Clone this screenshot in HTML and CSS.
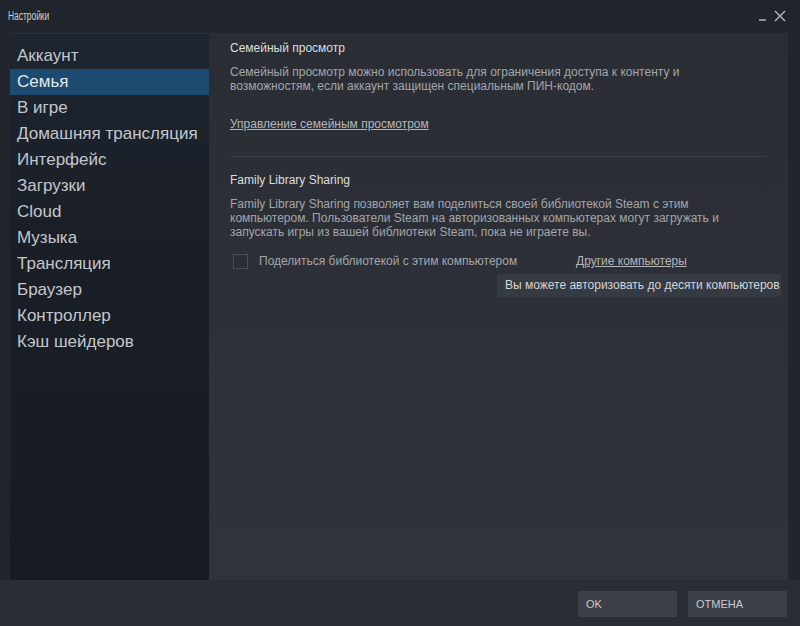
FILE: index.html
```html
<!DOCTYPE html>
<html lang="ru">

<head>
    <meta charset="UTF-8">
    <meta name="viewport" content="width=device-width, initial-scale=1.0">
    <title>Настройки</title>
    <link rel="stylesheet" href="styles.css">
</head>

<body>
    <div class="window">
        <div class="titlebar">
            <span class="title">Настройки</span>
            <div class="window-controls">
                <span class="minimize"></span>
                <svg class="close" width="12" height="12" viewBox="0 0 12 12">
                    <path d="M1 1 L11 11 M11 1 L1 11" stroke="#b9bcc0" stroke-width="1.4" fill="none" />
                </svg>
            </div>
        </div>

        <div class="main">
            <ul class="sidebar">
                <li>Аккаунт</li>
                <li class="active">Семья</li>
                <li>В игре</li>
                <li>Домашняя трансляция</li>
                <li>Интерфейс</li>
                <li>Загрузки</li>
                <li>Cloud</li>
                <li>Музыка</li>
                <li>Трансляция</li>
                <li>Браузер</li>
                <li>Контроллер</li>
                <li>Кэш шейдеров</li>
            </ul>

            <div class="content">
                <h2 class="section-title">Семейный просмотр</h2>
                <p class="text">Семейный просмотр можно использовать для ограничения доступа к контенту и<br>возможностям, если аккаунт защищен специальным ПИН-кодом.</p>
                <a class="link manage-link" href="#">Управление семейным просмотром</a>

                <div class="separator"></div>

                <h2 class="section-title">Family Library Sharing</h2>
                <p class="text">Family Library Sharing позволяет вам поделиться своей библиотекой Steam с этим<br>компьютером. Пользователи Steam на авторизованных компьютерах могут загружать и<br>запускать игры из вашей библиотеки Steam, пока не играете вы.</p>

                <div class="share-row">
                    <label class="checkbox-label"><span class="checkbox"></span>Поделиться библиотекой с этим компьютером</label>
                    <a class="link" href="#">Другие компьютеры</a>
                </div>

                <div class="tooltip">Вы можете авторизовать до десяти компьютеров</div>
            </div>
        </div>

        <div class="footer">
            <button class="btn">OK</button>
            <button class="btn">ОТМЕНА</button>
        </div>
    </div>
</body>

</html>
```

FILE: styles.css
```css
:root {
    --window-bg: #22252c;
    --content-bg: #2c2f36;
    --footer-bg: #2a2d33;
    --text-color: #a3a6ab;
    --heading-color: #dcdedf;
    --nav-color: #c3c7cb;
    --active-bg: #1d4a70;
}

* {
    margin: 0;
    padding: 0;
    box-sizing: border-box;
}

body {
    font-family: 'Liberation Sans', Arial, sans-serif;
    background-color: var(--window-bg);
    width: 800px;
    height: 626px;
    overflow: hidden;
}

.window {
    display: flex;
    flex-direction: column;
    height: 626px;
}

.titlebar {
    height: 33px;
    display: flex;
    justify-content: space-between;
    align-items: center;
    padding: 0 14px 2px 8px;
    background: linear-gradient(to bottom, #1f232b, #22262d);
}

/* заголовок окна в Steam узкий */
.title {
    display: inline-block;
    font-size: 12px;
    color: #cfd1d4;
    transform: scaleX(0.7);
    transform-origin: left center;
}

.window-controls {
    display: flex;
    align-items: flex-end;
    gap: 8px;
}

.minimize {
    width: 7px;
    height: 2px;
    background: #8d9096;
    margin-bottom: 1px;
}

.close {
    display: block;
}

.main {
    display: flex;
    height: 547px;
    padding: 0 12px 0 10px;
}

.sidebar {
    list-style: none;
    width: 199px;
    padding-top: 9px;
    background: linear-gradient(to bottom, #1d2530 0%, #1a1e26 40%, #181b22 100%);
    border-top: 1px solid #2a313c;
}

.sidebar li {
    font-size: 17px;
    line-height: 26px;
    height: 26px;
    padding-left: 7px;
    color: var(--nav-color);
    white-space: nowrap;
}

.sidebar li.active {
    background: var(--active-bg);
    color: #e3e7ea;
}

.content {
    position: relative;
    flex: 1;
    background: linear-gradient(to bottom, #2a2d34, #30333b);
    padding: 7px 22px 0 21px;
}

.section-title {
    font-size: 12px;
    font-weight: normal;
    line-height: 16px;
    color: var(--heading-color);
}

.text {
    font-size: 12px;
    line-height: 14px;
    color: var(--text-color);
    margin-top: 10px;
}

.link {
    font-size: 12px;
    line-height: 14px;
    color: #b3b6ba;
    text-decoration: underline;
}

.manage-link {
    display: block;
    margin-top: 24px;
}

.separator {
    height: 1px;
    background: #3b3e45;
    margin: 25px 0 15px;
}

.content .text + .share-row {
    margin-top: 14px;
}

.content .section-title + .text {
    margin-top: 9px;
}

.share-row {
    display: flex;
    align-items: center;
    height: 16px;
    padding-left: 3px;
}

.checkbox-label {
    display: flex;
    align-items: center;
    font-size: 12px;
    color: var(--text-color);
    width: 343px;
}

.checkbox {
    width: 15px;
    height: 15px;
    border: 1px solid #4b4e55;
    background: #2a2d33;
    margin-right: 11px;
}

.tooltip {
    position: absolute;
    left: 288px;
    top: 241px;
    width: 284px;
    height: 23px;
    background: #363a42;
    color: #d3d5d8;
    font-size: 12px;
    line-height: 23px;
    padding-left: 8px;
    border-radius: 2px;
    white-space: nowrap;
}

.footer {
    flex: 1;
    display: flex;
    justify-content: flex-end;
    gap: 11px;
    padding: 11px 13px 0 0;
    background: var(--footer-bg);
}

.btn {
    width: 99px;
    height: 26px;
    background: #3c3f48;
    color: #c9cbce;
    border: none;
    font-family: 'Liberation Sans', Arial, sans-serif;
    font-size: 11px;
    text-align: left;
    padding-left: 8px;
    border-radius: 1px;
}
```
